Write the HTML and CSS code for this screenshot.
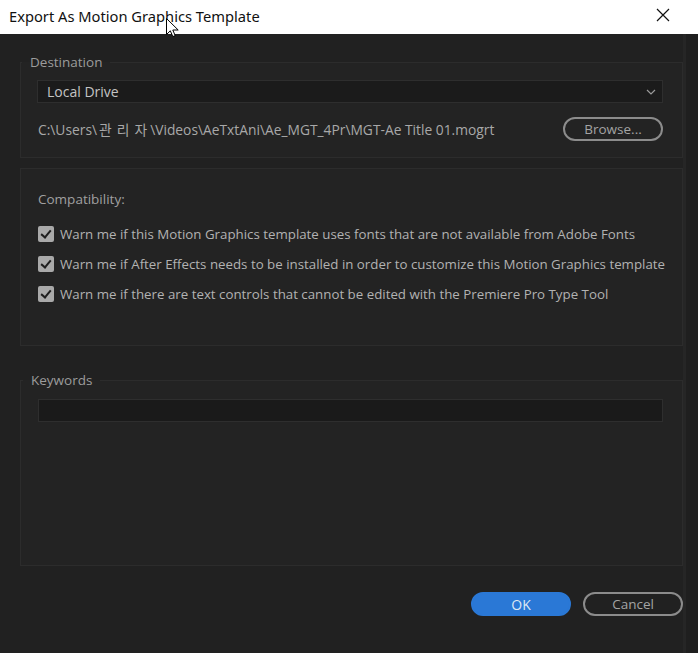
FILE: index.html
```html
<!DOCTYPE html>
<html lang="en">
<head>
    <meta charset="UTF-8">
    <title>Export As Motion Graphics Template</title>
    <link rel="stylesheet" href="styles.css">
</head>
<body>
    <header class="titlebar">
        <span class="title">Export As Motion Graphics Template</span>
        <svg class="close" width="14" height="14" viewBox="0 0 14 14">
            <path d="M1 1L13 13M13 1L1 13" stroke="#111" stroke-width="1.2" fill="none"/>
        </svg>
        <!-- mouse pointer left over the title -->
        <svg class="cursor" width="13" height="20" viewBox="0 0 13 20">
            <path d="M0.5 0.5V16.5L4.3 12.8L6.8 18.6L9.2 17.6L6.8 12H12.2Z" fill="#fff" stroke="#000" stroke-width="1"/>
        </svg>
    </header>

    <div class="dialog">
        <div class="content">
            <fieldset class="panel destination">
                <legend>Destination</legend>
                <div class="select">
                    <span>Local Drive</span>
                    <svg width="10" height="6" viewBox="0 0 10 6">
                        <path d="M1 1L5 5L9 1" stroke="#9a9a9a" stroke-width="1.2" fill="none"/>
                    </svg>
                </div>
                <div class="path-row">
                    <span class="path">C:\Users\<span class="ko">관리자</span>\Videos\AeTxtAni\Ae_MGT_4Pr\MGT-Ae Title 01.mogrt</span>
                    <button class="pill">Browse...</button>
                </div>
            </fieldset>

            <div class="panel compat">
                <div class="compat-title">Compatibility:</div>
                <div class="checks">
                    <label class="check"><span class="box"></span>Warn me if this Motion Graphics template uses fonts that are not available from Adobe Fonts</label>
                    <label class="check"><span class="box"></span>Warn me if After Effects needs to be installed in order to customize this Motion Graphics template</label>
                    <label class="check"><span class="box"></span>Warn me if there are text controls that cannot be edited with the Premiere Pro Type Tool</label>
                </div>
            </div>

            <fieldset class="panel keywords">
                <legend>Keywords</legend>
                <div class="text-input"></div>
            </fieldset>

            <div class="actions">
                <button class="pill primary">OK</button>
                <button class="pill">Cancel</button>
            </div>
        </div>
        <div class="gutter"><!-- right edge strip --></div>
    </div>
</body>
</html>
```

FILE: styles.css
```css
body {
    margin: 0;
    font-family: "Open Sans", "Noto Sans", "Noto Sans CJK KR", sans-serif;
    background-color: #212121;
    height: 653px;
    overflow: hidden;
}
.titlebar {
    position: relative;
    height: 34px;
    background-color: #fff;
    display: flex;
    align-items: center;
    justify-content: space-between;
    padding: 0 28px 0 9px;
    box-sizing: border-box;
}
.title {
    font-family: "Noto Sans", sans-serif;
    font-size: 14.7px;
    color: #111;
    margin-top: -2px;
}
.close {
    margin-top: -4px;
}
.cursor {
    position: absolute;
    left: 166px;
    top: 18px;
}
.dialog {
    display: flex;
    height: 619px;
}
.content {
    width: 663px;
    margin-left: 20px;
}
.gutter {
    flex: 1;
    border-left: 3px solid #262626;
    background-color: #1f1f1f;
}
.panel {
    border: 1px solid #2c2c2c;
    background-color: #232323;
    margin: 0;
    box-sizing: border-box;
    width: 663px;
}
legend {
    font-size: 13.5px;
    line-height: 18px;
    color: #9c9c9c;
    padding: 0 8px;
    margin-left: -15px;
}
.destination {
    margin-top: 19px;
    padding: 9px 19px 16px 16px;
}
.select {
    height: 23px;
    box-sizing: border-box;
    border: 1px solid #2e2e2e;
    background-color: #1b1b1b;
    display: flex;
    align-items: center;
    justify-content: space-between;
    padding: 0 6px 0 9px;
    font-size: 14px;
    color: #c4c4c4;
}
.path-row {
    margin-top: 14px;
    display: flex;
    align-items: center;
    justify-content: space-between;
    padding-left: 1px;
}
.path {
    font-size: 13.8px;
    color: #a8a8a8;
}
.ko {
    letter-spacing: 5px;
    margin-left: 2px;
    margin-right: -2px;
}
.pill {
    width: 100px;
    height: 24px;
    box-sizing: border-box;
    border: 2px solid #8c8c8c;
    border-radius: 12px;
    background: transparent;
    color: #a4a4a4;
    font-family: inherit;
    font-size: 13.5px;
    padding: 0;
}
.compat {
    margin-top: 10px;
    padding: 21px 18px 42px 17px;
}
.compat-title {
    font-size: 13.5px;
    line-height: 18px;
    color: #a0a0a0;
}
.checks {
    margin-top: 17px;
    display: flex;
    flex-direction: column;
    gap: 12px;
}
.check {
    display: flex;
    align-items: center;
    height: 18px;
    font-size: 13.3px;
    color: #b2b2b2;
    white-space: nowrap;
}
.box {
    width: 16px;
    height: 16px;
    margin-right: 6px;
    border-radius: 2px;
    background-color: #a9a9a9;
    position: relative;
    flex-shrink: 0;
}
.box::after {
    content: '';
    position: absolute;
    left: 5px;
    top: 2px;
    width: 4px;
    height: 8px;
    border: solid #1e1e1e;
    border-width: 0 2px 2px 0;
    transform: rotate(40deg);
}
.keywords {
    margin-top: 25px;
    padding: 10px 19px 143px 17px;
}
.text-input {
    height: 23px;
    box-sizing: border-box;
    border: 1px solid #2e2e2e;
    background-color: #1a1a1a;
}
.actions {
    margin-top: 26px;
    display: flex;
    justify-content: flex-end;
    gap: 12px;
}
.primary {
    border-color: #2a78d6;
    background-color: #2a78d6;
    color: #dde8f4;
    font-size: 14px;
}
```
